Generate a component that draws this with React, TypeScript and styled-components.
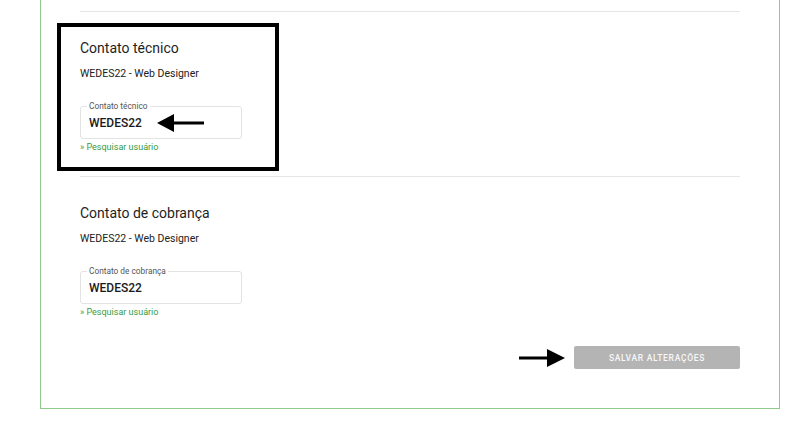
import React from "react";
import styled, { createGlobalStyle } from "styled-components";

const Global = createGlobalStyle`
  html, body { margin: 0; padding: 0; background: #ffffff; }
  body { font-family: Roboto, "Liberation Sans", Arial, sans-serif; color: #222; }
`;

const Page = styled.div`
  width: 800px;
  height: 423px;
  overflow: hidden;
  padding-left: 40px;
  box-sizing: border-box;
`;

const Card = styled.div`
  width: 740px;
  box-sizing: border-box;
  border: 1px solid #8fc98b;
  border-top: none;
  padding: 11px 39px 39px;
`;

const Divider = styled.div`
  height: 1px;
  background: #e6e6e6;
`;

const Section = styled.section`
  position: relative;
  padding: 28px 0 23px;
`;

const Heading = styled.h3`
  margin: 0;
  font-size: 14px;
  line-height: 16px;
  font-weight: 400;
  color: #1e1e1e;
`;

const Sub = styled.p`
  margin: 11px 0 0;
  font-size: 10.5px;
  line-height: 13px;
  color: #222;
`;

const Field = styled.div`
  position: relative;
  margin-top: 26px;
  width: 162px;
  height: 33px;
  box-sizing: border-box;
  border: 1px solid #e3e3e3;
  border-radius: 3px;
  padding: 9px 8px 0;
`;

const FieldLabel = styled.span`
  position: absolute;
  top: -6px;
  left: 6px;
  padding: 0 2px;
  background: #fff;
  font-size: 8.3px;
  line-height: 10px;
  color: #555;
`;

const FieldValue = styled.div`
  font-size: 12px;
  line-height: 14px;
  font-weight: 500;
  color: #1a1a1a;
`;

const Link = styled.a`
  display: block;
  margin-top: 3px;
  font-size: 9px;
  line-height: 11px;
  color: #3a9a3c;
  text-decoration: none;
`;

const Highlight = styled.div`
  position: absolute;
  left: -23px;
  top: 11px;
  width: 222px;
  height: 148px;
  box-sizing: border-box;
  border: 4px solid #000;
`;

const FieldArrow = styled.svg`
  position: absolute;
  left: 76px;
  top: 6px;
`;

const Footer = styled.div`
  margin-top: 5px;
  display: flex;
  justify-content: flex-end;
  align-items: center;
  gap: 9px;
`;

const SaveButton = styled.button`
  width: 166px;
  height: 23px;
  border: none;
  border-radius: 2px;
  background: #b4b4b4;
  color: #f7f7f7;
  font-family: Roboto, "Liberation Sans", Arial, sans-serif;
  font-size: 8.5px;
  font-weight: 500;
  letter-spacing: 0.7px;
  padding: 0;
`;

const LeftArrow = () => (
  <FieldArrow width="48" height="20" viewBox="0 0 48 20">
    <polygon points="0,10 17,1 17,8.5 47,8.5 47,11.5 17,11.5 17,19" fill="#000" />
  </FieldArrow>
);

const RightArrow = () => (
  <svg width="46" height="18" viewBox="0 0 46 18">
    <polygon points="46,9 28,0 28,7.5 0,7.5 0,10.5 28,10.5 28,18" fill="#000" />
  </svg>
);

type ContactProps = {
  title: string;
  label: string;
  highlighted?: boolean;
};

const ContactSection = ({ title, label, highlighted }: ContactProps) => (
  <Section>
    {highlighted && <Highlight />}
    <Heading>{title}</Heading>
    <Sub>WEDES22 - Web Designer</Sub>
    <Field>
      <FieldLabel>{label}</FieldLabel>
      <FieldValue>WEDES22</FieldValue>
      {highlighted && <LeftArrow />}
    </Field>
    <Link href="#">» Pesquisar usuário</Link>
  </Section>
);

export default function App() {
  return (
    <>
      <Global />
      <Page>
        <Card>
          <Divider />
          <ContactSection title="Contato técnico" label="Contato técnico" highlighted />
          <Divider />
          <ContactSection title="Contato de cobrança" label="Contato de cobrança" />
          <Footer>
            <RightArrow />
            <SaveButton>SALVAR ALTERAÇÕES</SaveButton>
          </Footer>
        </Card>
      </Page>
    </>
  );
}
